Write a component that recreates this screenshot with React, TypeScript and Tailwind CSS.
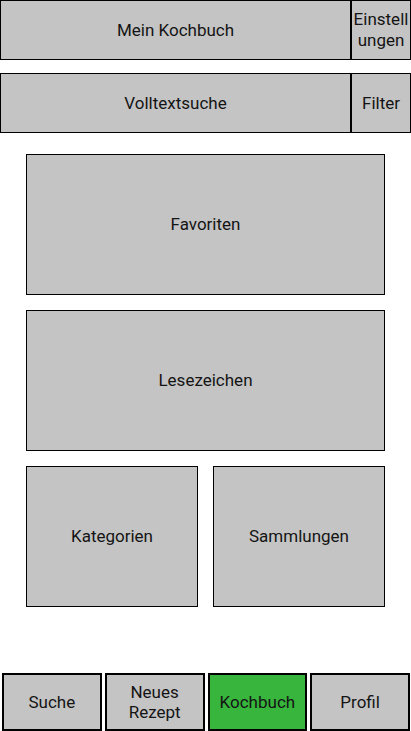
import React from 'react';

const box = "flex items-center justify-center bg-[#c4c4c4] border border-black text-[17px] text-[#141414]";

export default function App() {
  const tabs = ["Suche", "Neues Rezept", "Kochbuch", "Profil"];
  const active = "Kochbuch";

  return (
    <div className="flex flex-col h-[731px] w-[411px] bg-white font-['Roboto',sans-serif]">
      {/* Header */}
      <div className="flex h-[60px]">
        <div className={`${box} w-[351px] pt-[1px]`}>Mein Kochbuch</div>
        <div className={`${box} flex-1 text-center break-all leading-[21px]`}>Einstellungen</div>
      </div>

      {/* Search */}
      <div className="flex h-[60px] mt-[13px]">
        <div className={`${box} w-[351px] pt-[1px]`}>Volltextsuche</div>
        <div className={`${box} flex-1 pt-[1px]`}>Filter</div>
      </div>

      {/* Tiles */}
      <div className="flex flex-col gap-[15px] px-[26px] pt-[21px]">
        <div className={`${box} h-[141px]`}>Favoriten</div>
        <div className={`${box} h-[141px]`}>Lesezeichen</div>
        <div className="grid grid-cols-2 gap-[15px]">
          <div className={`${box} h-[141px]`}>Kategorien</div>
          <div className={`${box} h-[141px]`}>Sammlungen</div>
        </div>
      </div>

      {/* Bottom navigation */}
      <div className="mt-auto flex gap-[3px] pl-[2px] pr-[1px] h-[58px]">
        {tabs.map((t) => (
          <div
            key={t}
            className={`flex-1 flex items-center justify-center text-center leading-[20px] text-[17px] text-[#141414] border-2 border-black ${
              t === active ? 'bg-[#37b53c]' : 'bg-[#c4c4c4]'
            }`}
          >
            {t === "Neues Rezept" ? (
              <span>Neues<br />Rezept</span>
            ) : (
              t
            )}
          </div>
        ))}
      </div>
    </div>
  );
}
